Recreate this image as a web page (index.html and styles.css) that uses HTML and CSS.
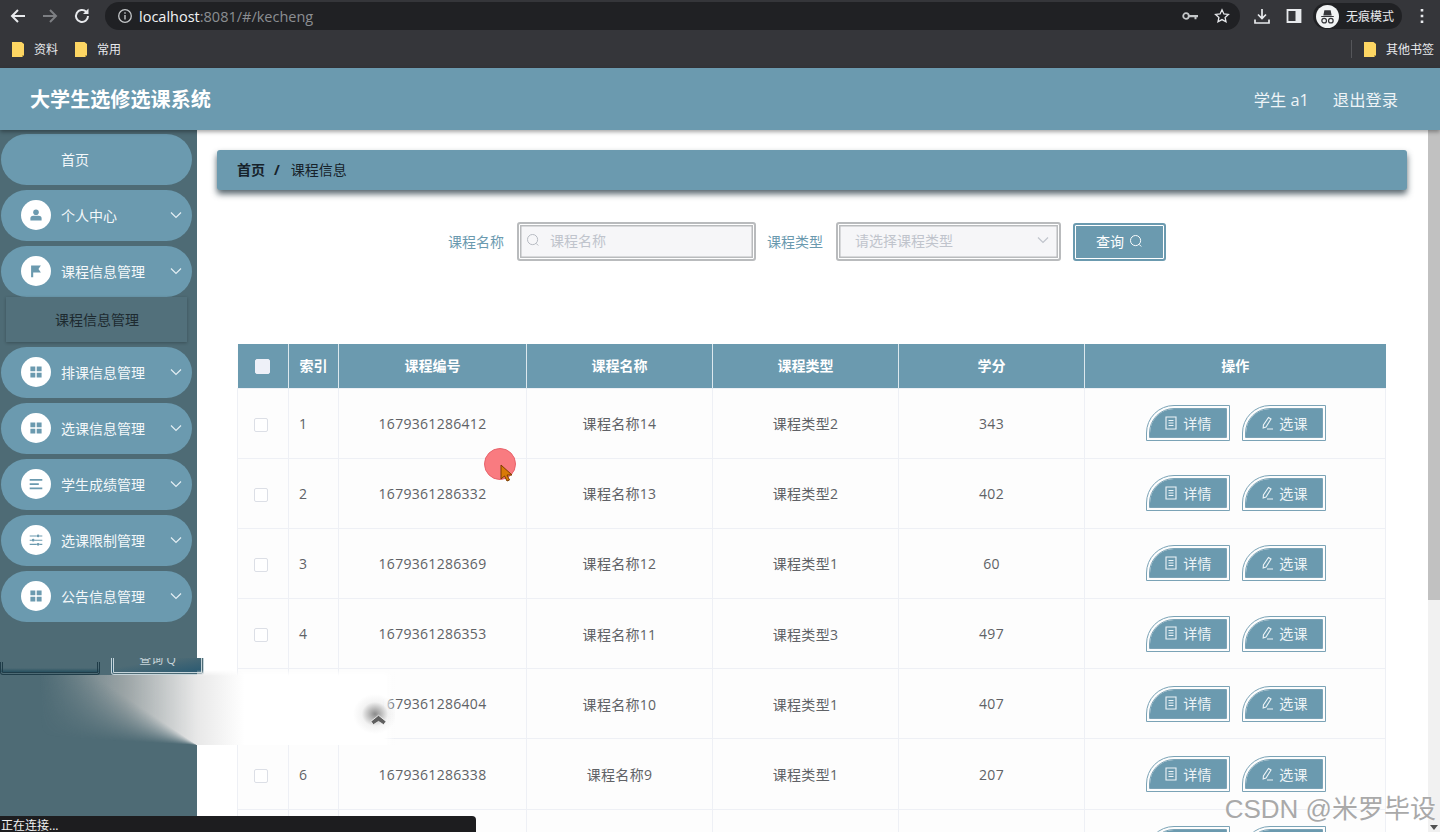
FILE: index.html
```html
<!DOCTYPE html>
<html lang="zh">
<head>
  <meta charset="UTF-8">
  <title>大学生选修选课系统</title>
  <link rel="stylesheet" href="styles.css">
</head>
<body>
  <svg class="sprites" width="0" height="0">
    <symbol id="i-user" viewBox="0 0 20 20"><circle cx="10" cy="6" r="4"/><path d="M2 18v-3a4 4 0 0 1 4-4h8a4 4 0 0 1 4 4v3z"/></symbol>
    <symbol id="i-flag" viewBox="0 0 20 20"><path d="M3 2h14l-3.500 5 3.500 5H6v7H3z"/></symbol>
    <symbol id="i-grid" viewBox="0 0 20 20"><path d="M2 2h7v7H2zM11 2h7v7h-7zM2 11h7v7H2zM11 11h7v7h-7z"/></symbol>
    <symbol id="i-lines" viewBox="0 0 20 20"><path d="M1 3h18v2.500H1zM1 9h13v2.500H1zM1 15h18v2.500H1z"/></symbol>
    <symbol id="i-sliders" viewBox="0 0 20 20"><path d="M1 3.500h10v1.500H1zM15 3.500h4v1.500h-4zM1 9.500h3v1.500H1zM8 9.500h11v1.500H8zM1 15.500h10v1.500H1zM15 15.500h4v1.500h-4z"/><circle cx="13" cy="4.200" r="2"/><circle cx="6" cy="10.200" r="2"/><circle cx="13" cy="16.200" r="2"/></symbol>
    <symbol id="i-chev" viewBox="0 0 12 8"><path d="M1 1.500l5 5 5-5" fill="none" stroke="currentColor" stroke-width="1.200"/></symbol>
    <symbol id="i-search" viewBox="0 0 16 16"><circle cx="7.500" cy="7.500" r="5.800" fill="none" stroke="currentColor" stroke-width="1.100"/><path d="M11.500 11.800l2.500 2.500" stroke="currentColor" stroke-width="1.100"/></symbol>
    <symbol id="i-doc" viewBox="0 0 14 14"><path d="M2 1h10v12H2zM4.500 4.500h5M4.500 7h5M4.500 9.500h5" fill="none" stroke="currentColor" stroke-width="1.100"/></symbol>
    <symbol id="i-pen" viewBox="0 0 14 14"><path d="M8.500 1.500l2.500 1.500-5 8-2.800 1 .2-3zM7 13h6" fill="none" stroke="currentColor" stroke-width="1.100"/></symbol>
    <symbol id="i-folder" viewBox="0 0 12 15"><path d="M0 0h9.500l2.500 2v11l-2 2H0z" fill="#fdd663"/><path d="M10 15v-2h2z" fill="#c9a63e"/></symbol>
  </svg>

  <div class="browser">
    <div class="toolbar">
      <svg class="nav-icon" viewBox="0 0 18 18"><path d="M16 9H3M9 3L3 9l6 6" fill="none" stroke="#e8eaed" stroke-width="2"/></svg>
      <svg class="nav-icon" viewBox="0 0 18 18"><path d="M2 9h13M9 3l6 6-6 6" fill="none" stroke="#7d7f83" stroke-width="2"/></svg>
      <svg class="nav-icon" viewBox="0 0 18 18"><path d="M15 9a6 6 0 1 1-1.800-4.300" fill="none" stroke="#e8eaed" stroke-width="2"/><path d="M15.500 1.500V7H10z" fill="#e8eaed"/></svg>
      <div class="urlbar">
        <svg class="url-info" viewBox="0 0 16 16"><circle cx="8" cy="8" r="6.300" fill="none" stroke="#c4c7c9" stroke-width="1.300"/><path d="M7.300 7h1.400v4.500H7.300zM7.300 4.300h1.400v1.500H7.300z" fill="#c4c7c9"/></svg>
        <span class="url-host">localhost</span><span class="url-rest">:8081/#/kecheng</span>
        <svg class="url-key" viewBox="0 0 16 10"><circle cx="4" cy="5" r="2.800" fill="none" stroke="#c4c7c9" stroke-width="1.800"/><path d="M7 4h9v2.200h-1.500v2h-2v-2H7z" fill="#c4c7c9"/></svg>
        <svg class="url-star" viewBox="0 0 16 16"><path d="M8 1.800l1.900 4.100 4.500.5-3.300 3 .9 4.400L8 11.600l-4 2.200.9-4.400-3.300-3 4.500-.5z" fill="none" stroke="#e8eaed" stroke-width="1.300"/></svg>
      </div>
      <svg class="tool-icon" viewBox="0 0 16 16"><path d="M8 1v9M4 6.500L8 10.500l4-4M1 11.500V15h14v-3.500" fill="none" stroke="#e8eaed" stroke-width="1.700"/></svg>
      <svg class="tool-icon" viewBox="0 0 16 16"><path d="M1.500 2h13v12h-13z" fill="none" stroke="#e8eaed" stroke-width="1.800"/><path d="M9.500 2h5v12h-5z" fill="#e8eaed"/></svg>
      <div class="incognito">
        <svg class="incognito-face" viewBox="0 0 22 22"><circle cx="11" cy="11" r="11" fill="#f1f3f4"/><path d="M5 10.500h12v1H5zM7 10l1-5h6l1 5z" fill="#35363a"/><circle cx="7.800" cy="15" r="2.200" fill="none" stroke="#35363a" stroke-width="1.200"/><circle cx="14.200" cy="15" r="2.200" fill="none" stroke="#35363a" stroke-width="1.200"/></svg>
        <span>无痕模式</span>
      </div>
      <svg class="dots" viewBox="0 0 4 16"><path d="M.7 1h2.600v2.600H.7zM.7 6.700h2.600v2.600H.7zM.7 12.400h2.600V15H.7z" fill="#e8eaed"/></svg>
    </div>
    <div class="bookmarks">
      <a class="bookmark"><svg class="folder"><use href="#i-folder"/></svg>资料</a>
      <a class="bookmark"><svg class="folder"><use href="#i-folder"/></svg>常用</a>
      <span class="bookmarks-sep"></span>
      <a class="bookmark"><svg class="folder"><use href="#i-folder"/></svg>其他书签</a>
    </div>
  </div>

  <header class="topbar">
    <div class="brand">大学生选修选课系统</div>
    <div class="user">
      <span>学生 a1</span>
      <span>退出登录</span>
    </div>
  </header>

  <div class="layout">
    <aside class="sidebar">
      <a class="menu-item"><span class="menu-text plain">首页</span></a>
      <a class="menu-item"><span class="menu-icon"><svg><use href="#i-user"/></svg></span><span class="menu-text">个人中心</span><svg class="chev"><use href="#i-chev"/></svg></a>
      <a class="menu-item"><span class="menu-icon"><svg><use href="#i-flag"/></svg></span><span class="menu-text">课程信息管理</span><svg class="chev"><use href="#i-chev"/></svg></a>
      <div class="submenu">课程信息管理</div>
      <a class="menu-item"><span class="menu-icon"><svg><use href="#i-grid"/></svg></span><span class="menu-text">排课信息管理</span><svg class="chev"><use href="#i-chev"/></svg></a>
      <a class="menu-item"><span class="menu-icon"><svg><use href="#i-grid"/></svg></span><span class="menu-text">选课信息管理</span><svg class="chev"><use href="#i-chev"/></svg></a>
      <a class="menu-item"><span class="menu-icon"><svg><use href="#i-lines"/></svg></span><span class="menu-text">学生成绩管理</span><svg class="chev"><use href="#i-chev"/></svg></a>
      <a class="menu-item"><span class="menu-icon"><svg><use href="#i-sliders"/></svg></span><span class="menu-text">选课限制管理</span><svg class="chev"><use href="#i-chev"/></svg></a>
      <a class="menu-item"><span class="menu-icon"><svg><use href="#i-grid"/></svg></span><span class="menu-text">公告信息管理</span><svg class="chev"><use href="#i-chev"/></svg></a>
    </aside>

    <main class="content">
      <div class="breadcrumb"><b>首页</b><b class="slash">/</b><span>课程信息</span></div>

      <form class="search">
        <label>课程名称</label>
        <div class="field field-name">
          <svg class="field-icon"><use href="#i-search"/></svg>
          <span>课程名称</span>
        </div>
        <label>课程类型</label>
        <div class="field field-type">
          <span>请选择课程类型</span>
          <svg class="field-chev"><use href="#i-chev"/></svg>
        </div>
        <button type="button" class="search-btn">查询<svg><use href="#i-search"/></svg></button>
      </form>

      <table class="grid">
        <thead>
          <tr>
            <th class="col-check"><span class="check head"></span></th>
            <th class="col-index">索引</th>
            <th class="col-code">课程编号</th>
            <th class="col-name">课程名称</th>
            <th class="col-type">课程类型</th>
            <th class="col-credit">学分</th>
            <th>操作</th>
          </tr>
        </thead>
        <tbody>
          <tr><td class="cell-check"><span class="check"></span></td><td class="index">1</td><td>1679361286412</td><td>课程名称14</td><td>课程类型2</td><td>343</td><td class="cell-act"><a class="act"><svg><use href="#i-doc"/></svg>详情</a><a class="act"><svg><use href="#i-pen"/></svg>选课</a></td></tr>
          <tr><td class="cell-check"><span class="check"></span></td><td class="index">2</td><td>1679361286332</td><td>课程名称13</td><td>课程类型2</td><td>402</td><td class="cell-act"><a class="act"><svg><use href="#i-doc"/></svg>详情</a><a class="act"><svg><use href="#i-pen"/></svg>选课</a></td></tr>
          <tr><td class="cell-check"><span class="check"></span></td><td class="index">3</td><td>1679361286369</td><td>课程名称12</td><td>课程类型1</td><td>60</td><td class="cell-act"><a class="act"><svg><use href="#i-doc"/></svg>详情</a><a class="act"><svg><use href="#i-pen"/></svg>选课</a></td></tr>
          <tr><td class="cell-check"><span class="check"></span></td><td class="index">4</td><td>1679361286353</td><td>课程名称11</td><td>课程类型3</td><td>497</td><td class="cell-act"><a class="act"><svg><use href="#i-doc"/></svg>详情</a><a class="act"><svg><use href="#i-pen"/></svg>选课</a></td></tr>
          <tr><td class="cell-check"><span class="check"></span></td><td class="index">5</td><td>1679361286404</td><td>课程名称10</td><td>课程类型1</td><td>407</td><td class="cell-act"><a class="act"><svg><use href="#i-doc"/></svg>详情</a><a class="act"><svg><use href="#i-pen"/></svg>选课</a></td></tr>
          <tr><td class="cell-check"><span class="check"></span></td><td class="index">6</td><td>1679361286338</td><td>课程名称9</td><td>课程类型1</td><td>207</td><td class="cell-act"><a class="act"><svg><use href="#i-doc"/></svg>详情</a><a class="act"><svg><use href="#i-pen"/></svg>选课</a></td></tr>
          <tr><td></td><td></td><td></td><td></td><td></td><td></td><td class="cell-act"><a class="act"></a><a class="act"></a></td></tr>
        </tbody>
      </table>
    </main>

    <div class="scrollbar">
      <div class="scroll-thumb"></div>
      <span class="scroll-down"></span>
    </div>
  </div>

  <!-- leftovers of the page transition, sitting over the sidebar and table -->
  <div class="ghost-btn ghost-a"></div>
  <div class="ghost-btn ghost-b">查询 Q</div>
  <div class="smear-side"></div>
  <div class="smear-main"></div>
  <svg class="cursor-up" viewBox="0 0 18 12"><path d="M9 1l8 6.500-2.500 3.500L9 7.500 3.500 11 1 7.500z" fill="#5f5f5f" stroke="#fff" stroke-width=".8"/></svg>

  <div class="click-dot"></div>
  <svg class="cursor" viewBox="0 0 14 20"><path d="M1 1v14l3.500-3 2.500 5 2.500-1-2.500-5H12z" fill="#d97a06" stroke="#7a3c00" stroke-width="1"/></svg>

  <div class="status">正在连接...</div>
  <div class="watermark">CSDN @米罗毕设</div>
</body>
</html>
```

FILE: styles.css
```css
* {
  box-sizing: border-box;
}
html, body {
  margin: 0;
  height: 832px;
  overflow: hidden;
}
body {
  position: relative;
  background-color: #fff;
  color: #606266;
  font-family: "Open Sans", "Noto Sans CJK SC", sans-serif;
  font-size: 14px;
}
.sprites {
  position: absolute;
}

/* browser chrome */
.browser {
  height: 68px;
  background-color: #35363a;
}
.toolbar {
  height: 32px;
  display: flex;
  align-items: center;
  padding-left: 9px;
}
.nav-icon {
  width: 18px;
  height: 18px;
  margin-right: 14px;
  flex: none;
}
.urlbar {
  width: 1135px;
  height: 28px;
  padding: 0 10px 0 12px;
  border-radius: 14px;
  background-color: #202124;
  display: flex;
  align-items: center;
  font-size: 14.5px;
  flex: none;
}
.url-info {
  width: 16px;
  height: 16px;
  margin-right: 6px;
}
.url-host {
  color: #f1f3f4;
}
.url-rest {
  color: #8b8e92;
}
.url-key {
  width: 16px;
  height: 10px;
  margin-left: auto;
  margin-right: 16px;
}
.url-star {
  width: 16px;
  height: 16px;
}
.tool-icon {
  width: 16px;
  height: 16px;
  margin-left: 14px;
  margin-right: 2px;
  flex: none;
}
.incognito {
  width: 89px;
  height: 26px;
  margin-left: 9px;
  border-radius: 13px;
  background-color: #202124;
  color: #e8eaed;
  font-size: 12px;
  display: flex;
  align-items: center;
  gap: 7px;
  flex: none;
}
.incognito-face {
  width: 23px;
  height: 23px;
  margin-left: 3px;
}
.dots {
  width: 4px;
  height: 16px;
  margin-left: 18px;
}
.bookmarks {
  height: 36px;
  padding: 0 6px 2px 12px;
  display: flex;
  align-items: center;
  color: #e8eaed;
  font-size: 12px;
}
.bookmark {
  display: flex;
  align-items: center;
  margin-right: 17px;
}
.bookmark:last-child {
  margin-right: 0;
}
.folder {
  width: 12px;
  height: 15px;
  margin-right: 10px;
}
.bookmarks-sep {
  width: 1px;
  height: 18px;
  margin-left: auto;
  margin-right: 12px;
  background-color: #55565a;
}

/* app header */
.topbar {
  position: relative;
  z-index: 2;
  height: 62px;
  padding: 0 42px 1px 30px;
  background-color: #6b9aaf;
  box-shadow: 0 2px 4px rgba(0, 0, 0, 0.35);
  display: flex;
  justify-content: space-between;
  align-items: center;
  color: #fff;
}
.brand {
  font-size: 20.1px;
  font-weight: bold;
}
.user {
  display: flex;
  gap: 24px;
  font-size: 16.3px;
  color: #eef4f7;
}
.layout {
  display: flex;
  height: 702px;
  overflow: hidden;
}

/* sidebar */
.sidebar {
  width: 197px;
  flex: none;
  padding: 4px 5px 0 1px;
  background-color: #4e6b75;
  display: flex;
  flex-direction: column;
  gap: 5px;
}
.menu-item {
  height: 51px;
  flex: none;
  padding: 0 0 1px 20px;
  border-radius: 26px;
  background-color: #6b9aaf;
  color: #f4f8fa;
  display: flex;
  align-items: center;
}
.menu-icon {
  width: 30px;
  height: 30px;
  margin-right: 10px;
  border-radius: 50%;
  background-color: #fff;
  color: #6b9aaf;
  fill: #6b9aaf;
  display: flex;
  align-items: center;
  justify-content: center;
}
.menu-icon svg {
  width: 14px;
  height: 14px;
}
.menu-text.plain {
  margin-left: 40px;
}
.chev {
  width: 12px;
  height: 8px;
  margin-left: auto;
  margin-right: 10px;
  color: #e3eef3;
}
.submenu {
  height: 45px;
  flex: none;
  margin: -5px 5px 0 5px;
  padding: 0 0 1px 49px;
  background-color: #52707b;
  box-shadow: 0 1px 3px rgba(0, 0, 0, 0.25);
  color: #1d2a30;
  display: flex;
  align-items: center;
}

/* main column */
.content {
  flex: 1;
  padding: 20px 21px 0 20px;
  min-width: 0;
  overflow: hidden;
}
.breadcrumb {
  height: 40px;
  padding: 0 20px 2px;
  border-radius: 3px;
  background-color: #6b9aaf;
  box-shadow: 0 4px 6px rgba(30, 50, 60, 0.75);
  display: flex;
  align-items: center;
  color: #16222a;
  font-size: 14px;
}
.slash {
  margin: 0 11px 0 9px;
}
.search {
  height: 39px;
  margin-top: 32px;
  padding-right: 10px;
  display: flex;
  justify-content: center;
  align-items: center;
}
.search label {
  padding-bottom: 2px;
  color: #6b9aaf;
  margin-right: 13px;
}
.field {
  height: 39px;
  margin-right: 11px;
  padding: 0 10px 3px;
  border: 2px solid #b9bbbd;
  border-radius: 3px;
  background-color: #f6f6f8;
  box-shadow: inset 0 0 0 1px #fff, inset 0 0 0 2.5px #b9bbbd;
  color: #c0c4cc;
  display: flex;
  align-items: center;
}
.field-name {
  width: 239px;
  padding-left: 7px;
}
.field-type {
  width: 225px;
  padding-left: 17px;
  margin-right: 12px;
}
.field-icon {
  width: 14px;
  height: 14px;
  margin-right: 10px;
  color: #b4b8c0;
}
.field-chev {
  width: 12px;
  height: 8px;
  margin-left: auto;
  color: #c0c4cc;
}
.search-btn {
  width: 93px;
  height: 38px;
  padding: 0 0 2px;
  border: 2px solid #6b9aaf;
  border-radius: 3px;
  background-color: #6b9aaf;
  box-shadow: inset 0 0 0 1px #fff;
  color: #fff;
  font-family: inherit;
  font-size: 14px;
  display: flex;
  justify-content: center;
  align-items: center;
  gap: 5px;
}
.search-btn svg {
  width: 14px;
  height: 14px;
}

/* table */
.grid {
  width: 1149px;
  margin: 83px 0 0 20px;
  border-collapse: collapse;
  table-layout: fixed;
  background-color: #fdfdfd;
}
.grid th {
  height: 44px;
  padding: 0 0 2px;
  background-color: #6b9aaf;
  border-right: 1px solid #dce8ee;
  color: #fff;
  font-size: 14px;
  font-weight: bold;
}
.grid th:last-child {
  border-right: none;
}
.grid td {
  height: 70.2px;
  padding: 0;
  border: 1px solid #eef0f5;
  letter-spacing: 0.3px;
  text-align: center;
}
.col-check { width: 51px; }
.col-index { width: 50px; }
.col-code { width: 188px; }
.col-name { width: 186px; }
.col-type { width: 186px; }
.col-credit { width: 186px; }
.grid td.index {
  padding-left: 10px;
  text-align: left;
}
.grid td.cell-check {
  padding-right: 4px;
}
.grid td.cell-act {
  padding-left: 2px;
}
.check {
  display: inline-block;
  width: 14px;
  height: 14px;
  border: 1px solid #dcdfe6;
  border-radius: 2px;
  background-color: #fff;
  vertical-align: middle;
}
.check.head {
  width: 15px;
  height: 15px;
  background-color: #eef0f8;
  border-color: #eef0f8;
}
.act {
  display: inline-flex;
  align-items: center;
  justify-content: center;
  gap: 5px;
  width: 84px;
  height: 36px;
  margin: 0 6px;
  padding-bottom: 1px;
  border: 4px double #7ba3b6;
  border-radius: 28px 0 0 0;
  background-color: #6b9aaf;
  background-clip: padding-box;
  color: #eef4f7;
  vertical-align: middle;
}
.act svg {
  width: 14px;
  height: 14px;
}

.scrollbar {
  position: relative;
  width: 12px;
  flex: none;
  background-color: #f1f1f1;
}
.scroll-thumb {
  height: 470px;
  background-color: #c1c1c1;
}
.scroll-down {
  position: absolute;
  left: 2px;
  bottom: 2px;
  border-left: 4px solid transparent;
  border-right: 4px solid transparent;
  border-top: 5px solid #505050;
}

/* overlays */
.ghost-btn {
  position: absolute;
  border: 3px double #c5d4da;
  border-top: none;
  border-radius: 0 0 3px 3px;
}
.ghost-a {
  left: 0;
  top: 662px;
  width: 100px;
  height: 13px;
  background: linear-gradient(to bottom, #4e6b75 60%, #27505f);
  border-color: #1f3c48;
}
.ghost-b {
  left: 111px;
  top: 658px;
  width: 93px;
  height: 17px;
  background: linear-gradient(to bottom right, #4e6b75 35%, #2a5a72);
  color: #c5d4da;
  font-size: 12px;
  line-height: 3px;
  text-align: center;
  overflow: hidden;
}
.smear-side {
  position: absolute;
  left: 40px;
  top: 675px;
  width: 157px;
  height: 70px;
  background: linear-gradient(to right, rgba(225, 225, 225, 0), rgba(190, 190, 188, 0.7) 55%, #e8e8e8 100%);
  -webkit-mask-image: conic-gradient(from 270deg at 100% 100%, transparent 3deg, #000 34deg);
  mask-image: conic-gradient(from 270deg at 100% 100%, transparent 3deg, #000 34deg);
}
.smear-main {
  position: absolute;
  left: 197px;
  top: 670px;
  width: 198px;
  height: 75px;
  background:
    radial-gradient(ellipse 22px 20px at 178px 44px, rgba(90, 90, 90, 0.7), rgba(200, 200, 200, 0.22) 60%, rgba(255, 255, 255, 0) 100%),
    linear-gradient(to right, #e8e8e8, #fff 24%, #fff 94%, rgba(255, 255, 255, 0));
  -webkit-mask-image: linear-gradient(to bottom, transparent, #000 6px);
  mask-image: linear-gradient(to bottom, transparent, #000 6px);
}
.cursor-up {
  position: absolute;
  left: 370px;
  top: 714px;
  width: 17px;
  height: 12px;
}
.click-dot {
  position: absolute;
  left: 484px;
  top: 448px;
  width: 32px;
  height: 32px;
  border-radius: 50%;
  background-color: #f97b80;
  border: 1px solid #e8646c;
}
.cursor {
  position: absolute;
  left: 500px;
  top: 464px;
  width: 14px;
  height: 20px;
}
.status {
  position: absolute;
  left: 0;
  bottom: 0;
  width: 476px;
  height: 16px;
  padding-left: 1px;
  border-radius: 0 4px 0 0;
  background-color: #1d1d1f;
  color: #f1f1f1;
  font-size: 12px;
  line-height: 20px;
}
.watermark {
  position: absolute;
  right: 4px;
  bottom: 8px;
  color: #a9a9a9;
  font-family: "Liberation Sans", "Noto Sans CJK SC", sans-serif;
  font-size: 26px;
  line-height: 30px;
  text-shadow: 0 0 2px #fff;
}
```
